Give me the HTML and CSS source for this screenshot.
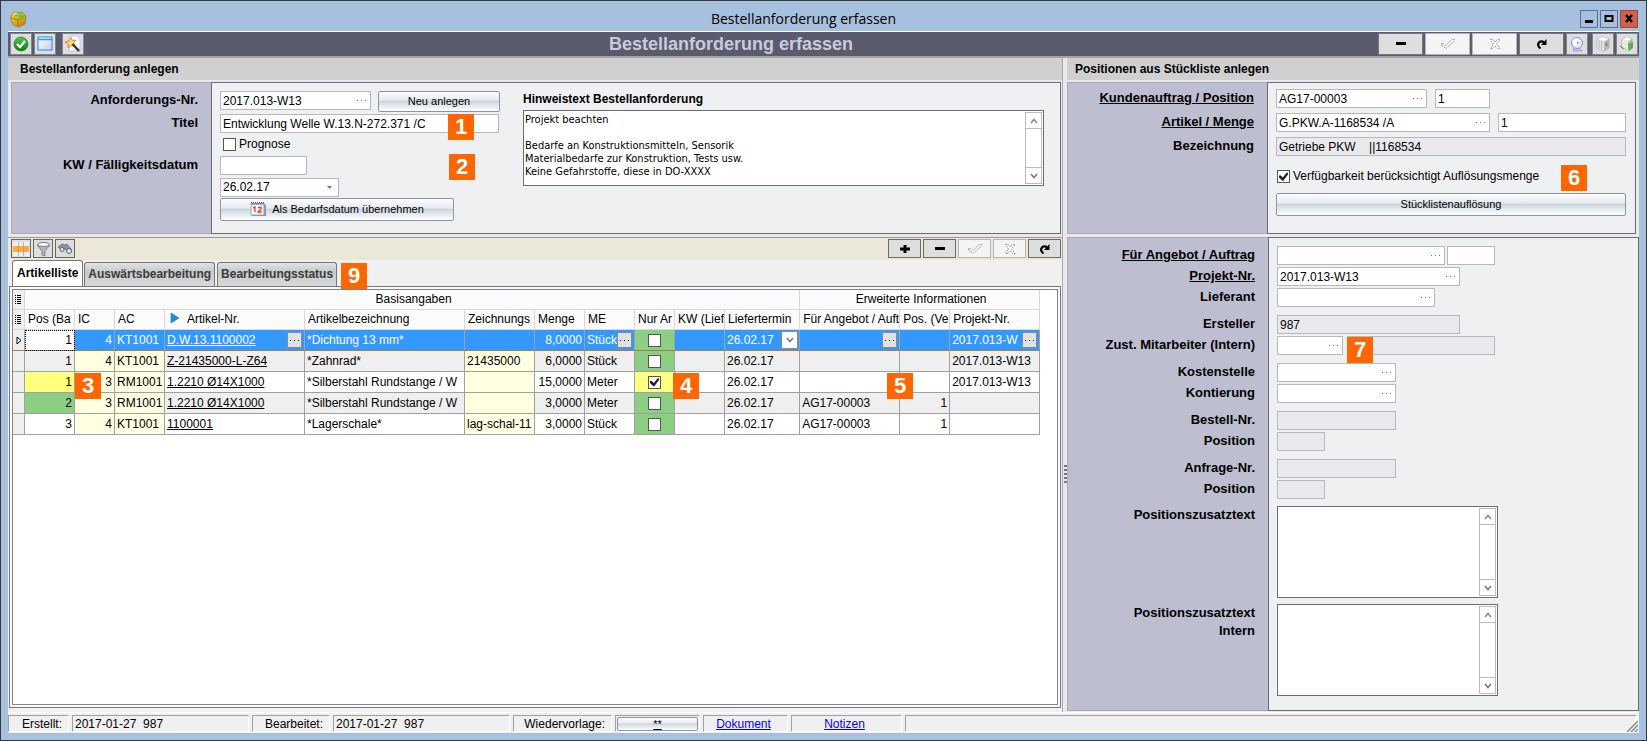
FILE: index.html
```html
<!DOCTYPE html>
<html lang="de">
<head>
<meta charset="utf-8">
<title>Bestellanforderung erfassen</title>
<link rel="stylesheet" href="styles.css">
</head>
<body>
<svg width="0" height="0" class="defs" aria-hidden="true">
  <defs>
    <linearGradient id="gGreen" x1="0" y1="0" x2="0" y2="1"><stop offset="0" stop-color="#55c855"/><stop offset="1" stop-color="#068006"/></linearGradient>
    <linearGradient id="gWin" x1="0" y1="0" x2="1" y2="1"><stop offset="0" stop-color="#ffffff"/><stop offset="1" stop-color="#ccccff"/></linearGradient>
    <linearGradient id="gGold" x1="0" y1="0" x2="1" y2="1"><stop offset="0" stop-color="#ffd83a"/><stop offset="1" stop-color="#b57a08"/></linearGradient>
    <symbol id="dots" viewBox="0 0 9 3"><path d="M0 1h1v1H0zM4 1h1v1H4zM8 1h1v1H8z" fill="currentColor"/></symbol>
    <symbol id="plus" viewBox="0 0 10 10"><path d="M3.500 1h3v2.500H10v3H6.500V9h-3V6.500H0v-3h3.500z"/></symbol>
    <symbol id="minus" viewBox="0 0 12 4"><path d="M1 0h10v3H1z"/></symbol>
    <symbol id="tick" viewBox="0 0 16 12"><path d="M2 7.500h2.500l2 2.500L14 2.500" fill="none" stroke="#fff" stroke-width="1.500"/><path d="M1.500 7V5.500h2l2 2.500L12 1.500h2.500V3L6 10.500z" fill="none" stroke="#8f8f8f" stroke-dasharray="1.500 1"/></symbol>
    <symbol id="cross" viewBox="0 0 14 12"><path d="M3.500 2l4 4.500 4-4.500M3.500 12l4-4.500 4 4.500" fill="none" stroke="#fff" stroke-width="1.500"/><path d="M2.500 1.500H5L7 4l2.500-2.500H12L8.500 6l3.500 4.500H9.500L7 8l-2 2.500H2.500L5.500 6z" fill="none" stroke="#8f8f8f" stroke-dasharray="1.500 1"/></symbol>
    <symbol id="redo" viewBox="0 0 12 12"><path d="M4.500 10.500C0 7 2.500 2 8 4" fill="none" stroke="#000" stroke-width="2.200"/><path d="M10.500 1v6H5z"/></symbol>
    <symbol id="up" viewBox="0 0 8 6"><path d="M1 5l3-3.500L7 5" fill="none" stroke="#8a8a8a" stroke-width="1.500"/></symbol>
    <symbol id="down" viewBox="0 0 8 6"><path d="M1 1l3 3.500L7 1" fill="none" stroke="#777" stroke-width="1.500"/></symbol>
    <symbol id="rows" viewBox="0 0 7 10"><path d="M0 0h1v1H0zM2 0h4v1H2zM0 2h1v1H0zM2 2h4v1H2zM0 4h1v1H0zM2 4h4v1H2zM0 6h1v1H0zM2 6h4v1H2zM0 8h1v1H0zM2 8h4v1H2z"/></symbol>
  </defs>
</svg>

<div class="window">
  <header class="titlebar">
    <svg class="app-icon" viewBox="0 0 18 18"><path d="M2 6l3-4 4 1 4-1 4 4-1 8-6 3-6-2-2-5z" fill="url(#gGold)" stroke="#a07010" stroke-width=".7"/><path d="M2 8l7 2 6-4M9 10v6" stroke="#a37a10" fill="none"/><path d="M8 3l5 1 2 4-3-1-1 2-2-3-4 1z" fill="#62c93a"/><path d="M4 4l3-1 2 2" stroke="#fff08a" fill="none"/></svg>
    <div class="window-title">Bestellanforderung erfassen</div>
    <div class="window-buttons">
      <button type="button" aria-label="Minimieren"><svg width="14" height="12"><path d="M3 7h8v3H3z"/></svg></button>
      <button type="button" aria-label="Maximieren"><svg width="14" height="12"><path d="M3.500 3h7v5h-7z" fill="none" stroke="#000" stroke-width="2"/></svg></button>
      <button type="button" class="close" aria-label="Schließen"><svg width="14" height="12"><path d="M4 2l6 7M10 2L4 9" stroke="#000" stroke-width="2.500"/></svg></button>
    </div>
  </header>

  <div class="client">
    <div class="mainbar">
      <div class="bar-left">
        <button type="button" class="tool" aria-label="Speichern"><svg width="16" height="16"><circle cx="8" cy="8" r="7" fill="url(#gGreen)" stroke="#087008" stroke-width=".6"/><path d="M4 8l3 3 5-6" fill="none" stroke="#fff" stroke-width="2.200"/></svg></button>
        <button type="button" class="tool" aria-label="Fenster"><svg width="16" height="16"><rect x="1" y="1" width="14" height="13" fill="url(#gWin)" stroke="#1a90f0"/><path d="M1 3.500h14" stroke="#1aa0ff" stroke-width="1.500"/></svg></button>
        <button type="button" class="tool spaced" aria-label="Assistent"><svg width="18" height="18"><path d="M5 1h8l3 3v12H5z" fill="#fafcff" stroke="#bcc6e8"/><path d="M7 2.500l1.500 3L12 5 9.500 8l1.500 3.500-3.500-1L4 13l.5-4L1 7l4-1z" fill="#ffdf80" stroke="#e8861a"/><path d="M8.500 9l6.500 7" stroke="#333" stroke-width="2.500"/></svg></button>
      </div>
      <h1>Bestellanforderung erfassen</h1>
      <div class="bar-right">
        <button type="button" class="wide" aria-label="Löschen"><svg width="12" height="4"><use href="#minus"/></svg></button>
        <button type="button" class="wide off" aria-label="Übernehmen" disabled><svg width="16" height="12"><use href="#tick"/></svg></button>
        <button type="button" class="wide off" aria-label="Verwerfen" disabled><svg width="14" height="12"><use href="#cross"/></svg></button>
        <button type="button" class="wide" aria-label="Aktualisieren"><svg width="12" height="12"><use href="#redo"/></svg></button>
        <button type="button" class="tool" aria-label="Zeit"><svg width="16" height="16"><path d="M5 12l-1 3h9l-3-4z" fill="#c3c6ee" stroke="#8a8ed0" stroke-width=".7"/><circle cx="8" cy="7" r="5.500" fill="#e4e6ff" stroke="#8a8ed0"/><circle cx="7" cy="6" r="3.500" fill="#fff"/><path d="M8 6h1.500v1.500H8z" fill="#5a60c0"/></svg></button>
        <button type="button" class="tool spaced" aria-label="Paket"><svg width="16" height="16"><path d="M2 3l6-2 6 2v9l-5 3-7-3z" fill="#bdbdbd" stroke="#999" stroke-width=".7"/><path d="M2 3l6-2 6 2-5 2z" fill="#fff"/><path d="M2 3l7 2v10l-7-3z" fill="#e4e4e4"/><path d="M4 4v8M6.500 5v8" stroke="#bbb"/><path d="M10.500 7l2-1v4l-2 1z" fill="#888"/></svg></button>
        <button type="button" class="tool" aria-label="Paket übernehmen"><svg width="16" height="16"><path d="M3 3l5-2 5 2v8l-4 3-6-3z" fill="#bdbdbd" stroke="#888" stroke-width=".7"/><path d="M3 3l5-2 5 2-4 2z" fill="#fff"/><path d="M3 3l6 2v9l-6-3z" fill="#e8e8e8"/><path d="M1 10l4 3" stroke="#777"/><path d="M9 8l5-2v6l-4 3z" fill="#4fb53c"/></svg></button>
      </div>
    </div>

    <main class="panes">
      <section class="pane left">
        <h2>Bestellanforderung anlegen</h2>
        <div class="form">
          <div class="labels rows-a">
            <label for="anf">Anforderungs-Nr.</label>
            <label for="titel">Titel</label>
            <span></span>
            <label for="kw">KW / Fälligkeitsdatum</label>
          </div>
          <div class="fields">
            <div class="rows-a col-a">
              <div class="line gap7"><span class="box w151"><input id="anf" value="2017.013-W13"><button type="button" aria-label="Auswählen"><svg width="9" height="3"><use href="#dots"/></svg></button></span><button type="button" class="push w122">Neu anlegen</button></div>
              <span class="box w279"><input id="titel" value="Entwicklung Welle W.13.N-272.371 /C"></span>
              <label class="check"><input type="checkbox"> Prognose</label>
              <span class="box w87"><input id="kw" value=""></span>
              <select class="box w119 date" aria-label="Fälligkeitsdatum"><option>26.02.17</option></select>
              <button type="button" class="push w234"><svg width="17" height="17"><path d="M1 2h13l2 2v11H2z" fill="#8890b8"/><path d="M1 3h13v11H1z" fill="#f4f6ff" stroke="#a0a0c0"/><path d="M1 1.500h13M2 3h12" stroke="#555" stroke-dasharray="1 1"/><path d="M3 7l2-1v5M8 6.500h3v2L8 10.500V11h3.500" fill="none" stroke="#f04000" stroke-width="1.300"/></svg>Als Bedarfsdatum übernehmen</button>
            </div>
            <div class="hint">
              <label for="hint">Hinweistext Bestellanforderung</label>
              <div class="memo memo-hint"><textarea id="hint">Projekt beachten

Bedarfe an Konstruktionsmitteln, Sensorik
Materialbedarfe zur Konstruktion, Tests usw.
Keine Gefahrstoffe, diese in DO-XXXX</textarea><div class="scroll"><button type="button" aria-label="Nach oben"><svg width="8" height="6"><use href="#up"/></svg></button><button type="button" aria-label="Nach unten"><svg width="8" height="6"><use href="#down"/></svg></button></div></div>
            </div>
            <b class="mark m1">1</b><b class="mark m2">2</b>
          </div>
        </div>

        <div class="list">
          <div class="listbar">
            <button type="button" class="tool small" aria-label="Tabelle"><svg width="16" height="14"><path d="M0 0h16v14H0z" fill="#eceefa"/><path d="M0 4h16v6H0z" fill="#ffab3c"/><path d="M5.500 0v4M10.500 0v4M5.500 10v4M10.500 10v4" stroke="#b9b2c6"/><path d="M5.500 4v6M10.500 4v6" stroke="#e8952c"/></svg></button>
            <button type="button" class="tool small" aria-label="Filter"><svg width="16" height="16"><path d="M2 4l5 6v4l3 1v-5l5-6z" fill="#b5b5b5" stroke="#777" stroke-width=".8"/><ellipse cx="8.500" cy="3.500" rx="6" ry="2" fill="#f6f6f6" stroke="#777"/></svg></button>
            <button type="button" class="tool small" aria-label="Suchen"><svg width="16" height="14"><path d="M1 5l4-3 3 1 2-1 5 6-3 3-4-4-3 1z" fill="#8a9494" stroke="#667" stroke-width=".7"/><circle cx="5" cy="7.500" r="2" fill="#dde8f4" stroke="#567"/><circle cx="12" cy="9" r="2.500" fill="#dde8f4" stroke="#567"/></svg></button>
            <span class="grow"></span>
            <button type="button" class="nav" aria-label="Neue Position"><svg width="10" height="10"><use href="#plus"/></svg></button>
            <button type="button" class="nav" aria-label="Position löschen"><svg width="12" height="4"><use href="#minus"/></svg></button>
            <button type="button" class="nav off" aria-label="Übernehmen" disabled><svg width="16" height="12"><use href="#tick"/></svg></button>
            <button type="button" class="nav off" aria-label="Verwerfen" disabled><svg width="14" height="12"><use href="#cross"/></svg></button>
            <button type="button" class="nav" aria-label="Aktualisieren"><svg width="12" height="12"><use href="#redo"/></svg></button>
          </div>
          <div class="tabs" role="tablist">
            <button type="button" role="tab" class="tab active" aria-selected="true">Artikelliste</button>
            <button type="button" role="tab" class="tab">Auswärtsbearbeitung</button>
            <button type="button" role="tab" class="tab">Bearbeitungsstatus</button>
            <b class="mark m9">9</b>
          </div>
          <div class="page">
            <div class="grid">
              <table>
                <colgroup><col class="c12"><col class="c50"><col class="c40"><col class="c50"><col class="c140"><col class="c160"><col class="c70"><col class="c50"><col class="c50"><col class="c40"><col class="c50"><col class="c75"><col class="c100"><col class="c50"><col class="c90"></colgroup>
                <thead>
                  <tr class="bands"><th class="sel"><svg width="7" height="10"><use href="#rows"/></svg></th><th colspan="11">Basisangaben</th><th colspan="3">Erweiterte Informationen</th></tr>
                  <tr><th class="sel"><svg width="7" height="10"><use href="#rows"/></svg></th><th>Pos (Ba</th><th>IC</th><th>AC</th><th><svg class="sort" width="10" height="10"><path d="M1 0l8 5-8 5z" fill="#1c8ae8" stroke="#1570c0" stroke-width=".6"/></svg>Artikel-Nr.</th><th>Artikelbezeichnung</th><th>Zeichnungs</th><th>Menge</th><th>ME</th><th>Nur Ar</th><th>KW (Lief</th><th>Liefertermin</th><th>Für Angebot / Auft</th><th>Pos. (Ve</th><th>Projekt-Nr.</th></tr>
                </thead>
                <tbody>
                  <tr class="current"><td class="sel"><svg width="6" height="9"><path d="M1 1l4 3.500L1 8z" fill="#fff" stroke="#000"/></svg></td><td class="num focus">1</td><td class="num">4</td><td>KT1001</td><td><a href="#a1">D.W.13.1100002</a><button type="button" class="cellbtn" aria-label="Auswählen"><svg width="9" height="3"><use href="#dots"/></svg></button></td><td>*Dichtung 13 mm*</td><td></td><td class="num">8,0000</td><td>Stück<button type="button" class="cellbtn" aria-label="Auswählen"><svg width="9" height="3"><use href="#dots"/></svg></button></td><td class="chk g"><input type="checkbox" aria-label="Nur Anfrage"></td><td></td><td>26.02.17<button type="button" class="cellbtn drop" aria-label="Datum wählen"><svg width="8" height="6"><use href="#down"/></svg></button></td><td><button type="button" class="cellbtn" aria-label="Auswählen"><svg width="9" height="3"><use href="#dots"/></svg></button></td><td></td><td>2017.013-W<button type="button" class="cellbtn" aria-label="Auswählen"><svg width="9" height="3"><use href="#dots"/></svg></button></td></tr>
                  <tr class="alt"><td class="sel"></td><td class="num">1</td><td class="num y">4</td><td class="y">KT1001</td><td><a href="#a2">Z-21435000-L-Z64</a></td><td>*Zahnrad*</td><td class="y">21435000</td><td class="num">6,0000</td><td>Stück</td><td class="chk g"><input type="checkbox" aria-label="Nur Anfrage"></td><td></td><td>26.02.17</td><td></td><td></td><td>2017.013-W13</td></tr>
                  <tr><td class="sel"></td><td class="num yy">1</td><td class="num y">3</td><td class="y">RM1001</td><td><a href="#a3">1.2210 Ø14X1000</a></td><td>*Silberstahl Rundstange / W</td><td class="y"></td><td class="num">15,0000</td><td>Meter</td><td class="chk yy"><input type="checkbox" checked aria-label="Nur Anfrage"></td><td></td><td>26.02.17</td><td></td><td></td><td>2017.013-W13</td></tr>
                  <tr class="alt"><td class="sel"></td><td class="num g">2</td><td class="num y">3</td><td class="y">RM1001</td><td><a href="#a4">1.2210 Ø14X1000</a></td><td>*Silberstahl Rundstange / W</td><td class="y"></td><td class="num">3,0000</td><td>Meter</td><td class="chk g"><input type="checkbox" aria-label="Nur Anfrage"></td><td></td><td>26.02.17</td><td>AG17-00003</td><td class="num">1</td><td></td></tr>
                  <tr><td class="sel"></td><td class="num">3</td><td class="num y">4</td><td class="y">KT1001</td><td><a href="#a5">1100001</a></td><td>*Lagerschale*</td><td class="y">lag-schal-11</td><td class="num">3,0000</td><td>Stück</td><td class="chk g"><input type="checkbox" aria-label="Nur Anfrage"></td><td></td><td>26.02.17</td><td>AG17-00003</td><td class="num">1</td><td></td></tr>
                </tbody>
              </table>
              <b class="mark m3">3</b><b class="mark m4">4</b><b class="mark m5">5</b>
            </div>
          </div>
        </div>
      </section>

      <div class="splitter"><i></i></div>

      <section class="pane right">
        <h2>Positionen aus Stückliste anlegen</h2>
        <div class="form">
          <div class="labels rows-b">
            <label for="ka" class="u">Kundenauftrag / Position</label>
            <label for="art" class="u">Artikel / Menge</label>
            <label for="bez">Bezeichnung</label>
          </div>
          <div class="fields">
            <div class="rows-b fill">
              <div class="line gap8"><span class="box w151"><input id="ka" value="AG17-00003"><button type="button" aria-label="Auswählen"><svg width="9" height="3"><use href="#dots"/></svg></button></span><span class="box w55"><input aria-label="Position" value="1"></span></div>
              <div class="line gap8"><span class="box w214"><input id="art" value="G.PKW.A-1168534 /A"><button type="button" aria-label="Auswählen"><svg width="9" height="3"><use href="#dots"/></svg></button></span><span class="box stretch"><input aria-label="Menge" value="1"></span></div>
              <div class="line"><span class="box ro stretch"><input id="bez" readonly value="Getriebe PKW    ||1168534"></span></div>
              <label class="check"><input type="checkbox" checked> Verfügbarkeit berücksichtigt Auflösungsmenge</label>
              <button type="button" class="push">Stücklistenauflösung</button>
            </div>
            <b class="mark m6">6</b>
          </div>
        </div>

        <div class="form detail">
          <div class="labels rows-c">
            <label for="fa" class="u">Für Angebot / Auftrag</label>
            <label for="pn" class="u">Projekt-Nr.</label>
            <label for="lf">Lieferant</label>
            <label for="er">Ersteller</label>
            <label for="zm">Zust. Mitarbeiter (Intern)</label>
            <label for="ks">Kostenstelle</label>
            <label for="kt">Kontierung</label>
            <label for="bn">Bestell-Nr.</label>
            <label for="bp">Position</label>
            <label for="an">Anfrage-Nr.</label>
            <label for="ap">Position</label>
            <label for="pz">Positionszusatztext</label>
            <label for="pi">Positionszusatztext<br>Intern</label>
          </div>
          <div class="fields">
            <div class="rows-c">
              <div class="line gap2"><span class="box w168"><input id="fa"><button type="button" aria-label="Auswählen"><svg width="9" height="3"><use href="#dots"/></svg></button></span><span class="box w48"><input aria-label="Auftragsposition"></span></div>
              <span class="box w183"><input id="pn" value="2017.013-W13"><button type="button" aria-label="Auswählen"><svg width="9" height="3"><use href="#dots"/></svg></button></span>
              <span class="box w158"><input id="lf"><button type="button" aria-label="Auswählen"><svg width="9" height="3"><use href="#dots"/></svg></button></span>
              <span class="box ro w183"><input id="er" readonly value="987"></span>
              <div class="line gap4"><span class="box w66"><input id="zm"><button type="button" aria-label="Auswählen"><svg width="9" height="3"><use href="#dots"/></svg></button></span><span class="box ro w148"><input aria-label="Name" readonly></span></div>
              <span class="box w119"><input id="ks"><button type="button" aria-label="Auswählen"><svg width="9" height="3"><use href="#dots"/></svg></button></span>
              <span class="box w119"><input id="kt"><button type="button" aria-label="Auswählen"><svg width="9" height="3"><use href="#dots"/></svg></button></span>
              <span class="box ro w119"><input id="bn" readonly></span>
              <span class="box ro w48"><input id="bp" readonly></span>
              <span class="box ro w119"><input id="an" readonly></span>
              <span class="box ro w48"><input id="ap" readonly></span>
              <div class="memo w221"><textarea id="pz"></textarea><div class="scroll"><button type="button" aria-label="Nach oben"><svg width="8" height="6"><use href="#up"/></svg></button><button type="button" aria-label="Nach unten"><svg width="8" height="6"><use href="#down"/></svg></button></div></div>
              <div class="memo w221"><textarea id="pi"></textarea><div class="scroll"><button type="button" aria-label="Nach oben"><svg width="8" height="6"><use href="#up"/></svg></button><button type="button" aria-label="Nach unten"><svg width="8" height="6"><use href="#down"/></svg></button></div></div>
            </div>
            <b class="mark m7">7</b>
          </div>
        </div>
      </section>
    </main>

    <footer class="status">
      <span class="cell s61 end">Erstellt:</span>
      <span class="cell s177">2017-01-27&nbsp; 987</span>
      <span class="cell s78 end">Bearbeitet:</span>
      <span class="cell s177">2017-01-27&nbsp; 987</span>
      <span class="cell s99 end">Wiedervorlage:</span>
      <span class="cell s86 btn"><button type="button" class="push">**</button></span>
      <span class="cell s86 mid"><a href="#dokument">Dokument</a></span>
      <span class="cell s111 mid"><a href="#notizen">Notizen</a></span>
      <span class="cell grow"></span>
      <svg class="grip" width="12" height="12"><path d="M1 12L12 1M5 12l7-7M9 12l3-3" stroke="#8c8c8c" stroke-width="1.500"/></svg>
    </footer>
  </div>
</div>
</body>
</html>
```
FILE: styles.css
```css
* { box-sizing: border-box; }
body {
  margin: 0;
  font: 12px/15px "Liberation Sans", Arial, sans-serif;
  color: #000;
}
button, input, select, textarea { font: inherit; color: inherit; margin: 0; padding: 0; }
button { display: flex; align-items: center; justify-content: center; }
svg { display: block; flex: none; }
.defs { position: absolute; }
.grow { flex: 1; }

.window {
  min-height: 100vh;
  display: flex;
  flex-direction: column;
  background: #a6c0de;
  border: 1px solid #35383c;
}
.titlebar { display: flex; align-items: center; height: 30px; padding: 6px 8px 0; }
.app-icon { width: 18px; height: 18px; }
.window-title { flex: 1; text-align: center; font: 14px/20px "Open Sans", "Noto Sans", sans-serif; }
.window-buttons { display: flex; gap: 2px; }
.window-buttons button { width: 18px; height: 18px; background: #a6c0de; border: 1px solid #5d6f96; }
.window-buttons .close { background: #cf614e; border-color: #a34236; }

.client {
  flex: 1;
  display: flex;
  flex-direction: column;
  margin: 0 7px 7px;
  background: #f0f0f0;
  border-top: 1px solid #fff;
}
.mainbar {
  display: flex;
  align-items: center;
  height: 26px;
  padding: 0 1px 0 2px;
  background: #5a5c6e;
  border-bottom: 2px solid #a5a5a5;
}
.mainbar h1 { flex: 1; margin: 0; text-align: center; font-size: 18px; line-height: 22px; color: #c9cbda; }
.bar-left, .bar-right { display: flex; gap: 2px; }
.tool { width: 22px; height: 22px; background: #dedede; border: 1px solid #84858e; }
.spaced { margin-left: 4px; }
.bar-right .spaced { margin-left: 2px; }
.wide { width: 45px; height: 22px; background: #dedede; border: 1px solid #777; }
.off { background: #f4f4f4; border-color: #b4b4b4; }

.panes { flex: 1; display: grid; grid-template-columns: 1054fr 5px 572fr; }
.pane { display: flex; flex-direction: column; min-width: 0; background: #e9e9ec; }
.pane h2 {
  margin: 0 0 2px;
  padding-left: 12px;
  font-size: 12px;
  line-height: 22px;
  background: #d0d0d0;
}
.right h2 { padding-left: 8px; }
.splitter {
  display: flex;
  align-items: center;
  justify-content: center;
  background: #e9e9ec;
  border-left: 1px solid #a8a8a8;
}
.splitter i { width: 3px; height: 20px; margin-top: 180px; background: repeating-linear-gradient(#777 0 2px, #e9e9ec 2px 4px); }

.form { display: grid; grid-template-columns: 200px 1fr; height: 152px; margin: 0 1px 3px 3px; }
.right .form { margin: 0 3px 3px 0; }
.labels { background: #bdbecf; border: 1px solid #a9aabf; border-right: 0; text-align: right; padding-right: 13px; }
.labels label { font-size: 13px; font-weight: bold; line-height: 18px; }
.u { text-decoration: underline; }
.fields { position: relative; display: flex; background: #eff0f2; border: 1px solid #6b6d75; }
.rows-a, .rows-b, .rows-c { display: grid; align-content: start; align-items: start; }
.rows-a { grid-template-rows: 23px 23px 19px 22px 20px 24px; padding-top: 8px; }
.rows-b { grid-template-rows: 24px 24px 32px 24px 24px; padding-top: 6px; }
.rows-c { grid-template-rows: 21px 21px 27px 21px 27px 21px 27px 21px 27px 21px 26px 98px 92px; padding-top: 8px; }
.fields > .rows-a, .fields > .rows-b, .fields > .rows-c { padding-left: 8px; }
.col-a { width: 311px; }
.fill { flex: 1; padding-right: 9px; }
.right .form.detail { flex: 1; height: auto; margin: 0 0 1px; grid-template-columns: 201px 1fr; }

.line { display: flex; }
.gap2 { gap: 2px; }
.gap4 { gap: 4px; }
.gap7 { gap: 7px; }
.gap8 { gap: 8px; }
.box { display: flex; align-items: center; height: 19px; background: #fff; border: 1px solid #b4b8bf; }
.box input { flex: 1; width: 0; height: 17px; padding-left: 2px; border: 0; background: none; outline: 0; }
.box button { width: 18px; height: 15px; border: 0; background: none; color: #777; }
.box.ro { background: #eaeaec; }
.stretch { flex: 1; }
.w48 { width: 48px; } .w55 { width: 55px; } .w66 { width: 66px; } .w87 { width: 87px; }
.w119 { width: 119px; } .w122 { width: 122px; } .w148 { width: 148px; } .w151 { width: 151px; }
.w158 { width: 158px; } .w168 { width: 168px; } .w183 { width: 183px; } .w214 { width: 214px; }
.w221 { width: 221px; } .w234 { width: 234px; } .w279 { width: 279px; }
.date {
  appearance: none;
  padding-left: 2px;
  border-radius: 0;
  background: #fff url("data:image/svg+xml,%3Csvg xmlns='http://www.w3.org/2000/svg' width='5' height='3'%3E%3Cpath d='M0 0h5L2.500 3z' fill='%23777'/%3E%3C/svg%3E") no-repeat right 6px center / 5px 3px;
}
.push {
  height: 21px;
  gap: 5px;
  font-size: 11px;
  background: linear-gradient(#fdfdfe, #e6eaef 42%, #ccd6df 50%, #dce3ea 65%, #fff);
  border: 1px solid #8b94a0;
  border-radius: 2px;
}
.push.w234, .fill > .push { height: 23px; }
.check { display: flex; align-items: center; gap: 3px; padding-left: 1px; line-height: 15px; }
input[type="checkbox"] {
  appearance: none;
  display: grid;
  place-items: center;
  width: 13px;
  height: 13px;
  background: #fff;
  border: 1px solid #555;
}
.col-a .check { padding-left: 3px; }
input[type="checkbox"]:checked::before {
  content: "";
  width: 9px;
  height: 9px;
  background: #222;
  clip-path: polygon(0 40%, 20% 40%, 42% 62%, 85% 8%, 100% 8%, 100% 28%, 48% 96%, 36% 96%, 0 62%);
}
.hint { flex: 1; display: flex; flex-direction: column; padding: 8px 16px 0 0; }
.hint label { font-weight: bold; line-height: 16px; margin-bottom: 3px; }
.memo { display: flex; height: 92px; padding: 1px; background: #fff; border: 1px solid #6b6d75; }
.memo-hint { height: 76px; }
.memo textarea {
  flex: 1;
  min-width: 0;
  padding: 1px 0 0;
  border: 0;
  outline: 0;
  resize: none;
  overflow: hidden;
  background: none;
  font: 11px/13px "DejaVu Sans Condensed", "Liberation Sans", sans-serif;
}
.scroll { width: 17px; display: flex; flex-direction: column; justify-content: space-between; border: 1px solid #bbb; }
.scroll button { height: 16px; border: 0; background: #fff; }
.scroll button:first-child { border-bottom: 1px solid #bbb; }
.scroll button:last-child { border-top: 1px solid #bbb; }

.mark {
  position: absolute;
  width: 26px;
  height: 26px;
  background: #f60;
  color: #fff;
  text-align: center;
  font-size: 22px;
  line-height: 26px;
}
.m1 { left: 236px; top: 31px; }
.m2 { left: 237px; top: 71px; }
.m3 { left: 62px; top: 83px; }
.m4 { left: 660px; top: 83px; }
.m5 { left: 874px; top: 83px; }
.m6 { right: 48px; top: 82px; }
.m7 { left: 78px; top: 99px; }
.m9 { left: 333px; top: 3px; }

.list { flex: 1; display: flex; flex-direction: column; background: #f0f0f0; border-top: 1px solid #999; }
.listbar { display: flex; align-items: center; gap: 2px; height: 22px; padding: 0 1px 1px 3px; background: #ebe8d8; }
.tool.small { width: 20px; height: 19px; background: #dedede; border-color: #666; }
.nav { width: 33px; height: 19px; background: #dedede; border: 1px solid #6b6b6b; }
.nav.off { background: #f4f4f4; border-color: #b4b4b4; }
.tabs { position: relative; display: flex; align-items: flex-end; gap: 2px; height: 26px; padding-left: 4px; }
.tab {
  height: 24px;
  padding: 0 3px;
  font-weight: bold;
  color: #3b3b3b;
  border: 1px solid #777;
  border-bottom: 0;
  border-radius: 3px 3px 0 0;
  background: linear-gradient(#e2e2e2, #c6c9cc 40%, #d9d9d9);
}
.tab.active { height: 26px; padding: 0 4px; color: #000; background: #fff; margin-right: -1px; }
.page { flex: 1; display: flex; margin: 0 1px 4px 1px; padding: 2px; background: #fafafa; border: 1px solid #777; }
.grid { position: relative; flex: 1; background: #fff; border: 1px solid #80848f; overflow: hidden; }

table { table-layout: fixed; width: 1027px; border-collapse: separate; border-spacing: 0; }
.c12 { width: 12px; } .c40 { width: 40px; } .c50 { width: 50px; } .c70 { width: 70px; } .c75 { width: 75px; }
.c90 { width: 90px; } .c100 { width: 100px; } .c140 { width: 140px; } .c160 { width: 160px; }
th, td { position: relative; overflow: hidden; white-space: nowrap; text-align: left; font-weight: normal; }
th { height: 20px; padding: 0 0 0 3px; border-right: 1px solid #d8d8d8; border-bottom: 1px solid #d8d8d8; background: #fcfcfc; }
.bands th { text-align: center; }
td { height: 21px; padding: 0 2px; border-right: 1px solid #a0a0a0; border-bottom: 1px solid #a0a0a0; }
th.sel, td.sel { padding: 0 2px; background: #f0f0f0; }
td.sel svg { margin-left: 1px; }
.sort { display: inline-block; margin: 0 7px 0 2px; }
.num { text-align: right; }
.alt td { background: #efefef; }
td.y, .alt td.y { background: #ffffe1; }
td.yy { background: #ffff80; }
td.g, .alt td.g, .current td.g { background: #8bce84; }
.current td { background: #39f; color: #fff; border-bottom-color: #b87838; }
.current td.g { background: #8bce84; }
.current td.sel { background: #f0f0f0; }
.current td.focus { background: #fff; color: #000; outline: 1px dotted #000; outline-offset: -1px; }
td a { color: inherit; }
.chk input { margin: 0 auto; }
.cellbtn { position: absolute; right: 2px; top: 2px; width: 15px; height: 16px; background: #e1e1e1; border: 1px solid #8a8a8a; color: #000; }
.cellbtn.drop { right: 1px; top: 1px; width: 17px; height: 18px; background: #fff; }

.status { position: relative; display: flex; gap: 3px; height: 21px; padding: 2px 2px 1px 0; border-top: 1px solid #fff; }
.cell {
  padding: 0 6px 0 2px;
  line-height: 16px;
  border: 1px solid #a0a0a0;
  border-right-color: #fff;
  border-bottom-color: #fff;
}
.end { text-align: right; }
.mid { text-align: center; }
.cell a { color: #00f; }
.cell.btn { padding: 1px; }
.btn .push { width: 100%; height: 14px; text-decoration: underline; }
.s61 { width: 61px; } .s78 { width: 78px; } .s86 { width: 85px; } .s99 { width: 99px; }
.s111 { width: 111px; } .s177 { width: 177px; }
.grip { position: absolute; right: 1px; bottom: 1px; }
```
